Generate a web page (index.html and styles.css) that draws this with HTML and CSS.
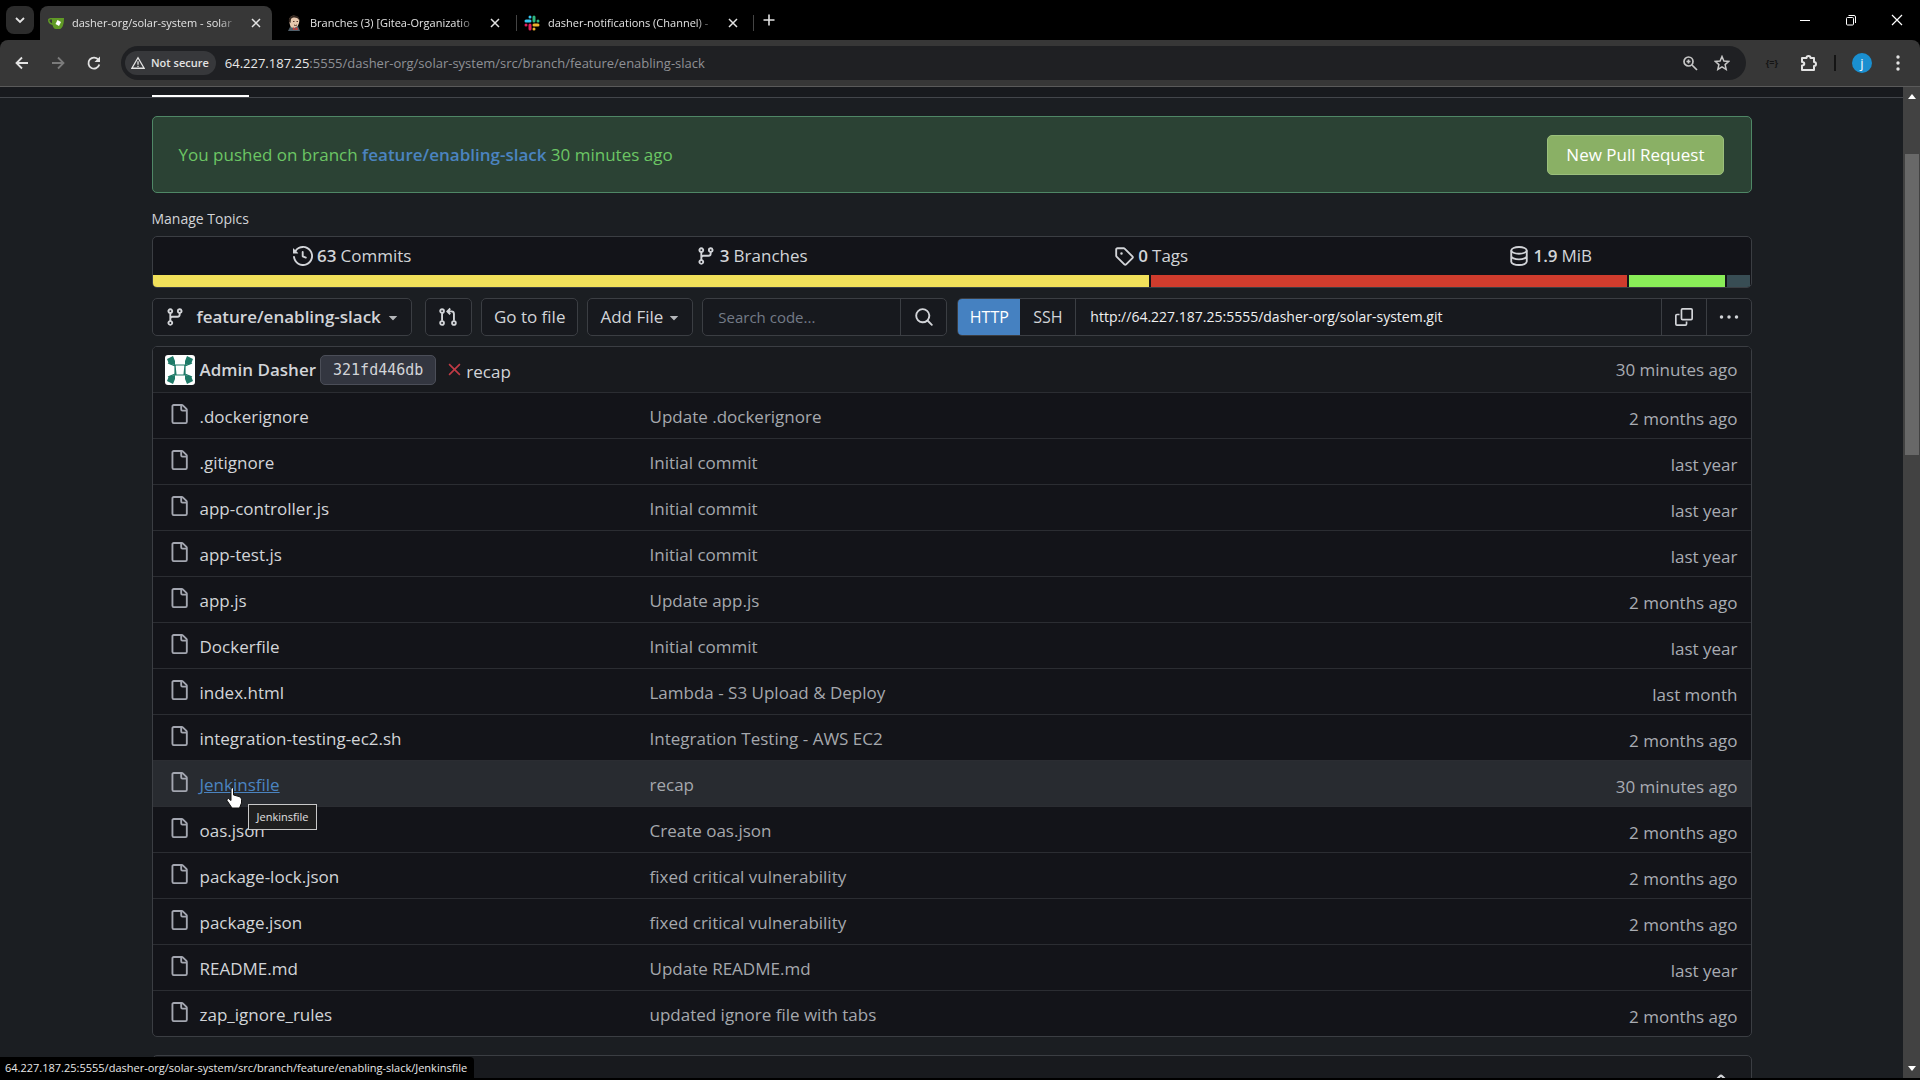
FILE: index.html
```
<!DOCTYPE html>
<html lang="en">
<head>
    <meta charset="UTF-8">
    <meta name="viewport" content="width=device-width, initial-scale=1.0">
    <title>dasher-org/solar-system - solar-system</title>
    <link rel="stylesheet" href="styles.css">
</head>
<body>
    <!-- Icons used more than once -->
    <svg class="sprite" aria-hidden="true">
        <symbol id="i-file" viewBox="0 0 16 16"><path d="M2 1.75C2 .784 2.784 0 3.75 0h6.586c.464 0 .909.184 1.237.513l2.914 2.914c.329.328.513.773.513 1.237v9.586A1.75 1.75 0 0 1 13.25 16h-9.5A1.75 1.75 0 0 1 2 14.25Zm1.75-.25a.25.25 0 0 0-.25.25v12.5c0 .138.112.25.25.25h9.5a.25.25 0 0 0 .25-.25V6h-2.75A1.75 1.75 0 0 1 9 4.25V1.5Zm6.75.062V4.25c0 .138.112.25.25.25h2.688l-.011-.013-2.914-2.914-.013-.011Z"/></symbol>
        <symbol id="i-branch" viewBox="0 0 16 16"><path d="M9.5 3.25a2.25 2.25 0 1 1 3 2.122V6A2.5 2.5 0 0 1 10 8.5H6a1 1 0 0 0-1 1v1.128a2.251 2.251 0 1 1-1.5 0V5.372a2.25 2.25 0 1 1 1.5 0v1.836A2.493 2.493 0 0 1 6 7h4a1 1 0 0 0 1-1v-.628A2.25 2.25 0 0 1 9.5 3.25Zm-6 0a.75.75 0 1 0 1.5 0 .75.75 0 0 0-1.5 0Zm8.25-.75a.75.75 0 1 0 0 1.5.75.75 0 0 0 0-1.5ZM4.25 12a.75.75 0 1 0 0 1.5.75.75 0 0 0 0-1.5Z"/></symbol>
        <symbol id="i-caret" viewBox="0 0 16 16"><path d="m4.427 7.427 3.396 3.396a.25.25 0 0 0 .354 0l3.396-3.396A.25.25 0 0 0 11.396 7H4.604a.25.25 0 0 0-.177.427Z"/></symbol>
        <symbol id="i-close" viewBox="0 0 10 10"><path d="M1 1l8 8M9 1l-8 8" fill="none" stroke="currentColor" stroke-width="1.5"/></symbol>
    </svg>

    <div class="tab-strip">
        <button class="tab-search" aria-label="Search tabs"><svg viewBox="0 0 10 10" width="10" height="10"><path d="M1 3l4 4 4-4" fill="none" stroke="currentColor" stroke-width="1.8"/></svg></button>
        <div class="tab active">
            <svg class="favicon" viewBox="0 0 16 16"><path d="M4 3h12c0 5-1 10-4 11H8C6 14 5 12 4.500 10 1.500 9.500 0 7.500 0 5c0-1.500 1.500-2 4-2zM1.500 5c0 1.500 1 3 2.500 3.300V4.500C2.500 4.300 1.500 4.300 1.500 5z" fill="#609926"/><path d="M9.500 5l3.500 2-2 4-3.500-2z" fill="#fff"/></svg>
            <span class="tab-title">dasher-org/solar-system - solar</span>
            <button class="tab-close" aria-label="Close tab"><svg class="x"><use href="#i-close"/></svg></button>
        </div>
        <div class="tab">
            <svg class="favicon" viewBox="0 0 16 16"><path d="M3 6c0-4 3-6 6-5 4 .5 5 4 4 7l-2 5H5L4 10z" fill="#e8c8ae"/><path d="M3 7c-1-4 2-7 6-6.500C12 1 14 3 13 5 11 2 7 2 5 4L4.500 8z" fill="#33261f"/><path d="M2 16l2-4 4 1 4-2 2 5z" fill="#52606b"/><path d="M7 12l2 2 2-2 1 3-3-.5L7 15z" fill="#d33833"/><path d="M7 6.500h1.500M10.500 6.500H12M8 10q1.500 1 3 0" stroke="#5d392c" fill="none"/></svg>
            <span class="tab-title">Branches (3) [Gitea-Organizatio</span>
            <button class="tab-close" aria-label="Close tab"><svg class="x"><use href="#i-close"/></svg></button>
        </div>
        <div class="tab divided">
            <svg class="favicon" viewBox="0 0 16 16" fill="none" stroke-width="3" stroke-linecap="round"><path d="M6 2v.1M2 6h4" stroke="#36c5f0"/><path d="M14 6v.1M10 2v4" stroke="#2eb67d"/><path d="M10 14v-.1M14 10h-4" stroke="#ecb22e"/><path d="M2 10v.1M6 14v-4" stroke="#e01e5a"/></svg>
            <span class="tab-title">dasher-notifications (Channel) -</span>
            <button class="tab-close" aria-label="Close tab"><svg class="x"><use href="#i-close"/></svg></button>
        </div>
        <button class="new-tab" aria-label="New tab"><svg viewBox="0 0 12 12" width="12" height="12"><path d="M6 0.500v11M0.500 6h11" stroke="currentColor" stroke-width="1.6"/></svg></button>
        <div class="window-buttons">
            <button aria-label="Minimize"><svg viewBox="0 0 12 12" width="12" height="12"><path d="M1 6.500h10" stroke="currentColor"/></svg></button>
            <button aria-label="Restore"><svg viewBox="0 0 12 12" width="12" height="12" fill="none" stroke="currentColor"><rect x="1.500" y="3.500" width="7" height="7.500" rx="1"/><path d="M3.500 1.500h5.500q1.500 0 1.500 1.500v6"/></svg></button>
            <button aria-label="Close"><svg viewBox="0 0 12 12" width="12" height="12"><path d="M1 1l10 10M11 1L1 11" stroke="currentColor" stroke-width="1.2"/></svg></button>
        </div>
    </div>

    <div class="browser-bar">
        <button class="nav-button" aria-label="Back"><svg viewBox="0 0 16 16" width="16" height="16"><path d="M14 8H3M8 2.500L2.500 8 8 13.500" fill="none" stroke="currentColor" stroke-width="1.8"/></svg></button>
        <button class="nav-button dim" aria-label="Forward"><svg viewBox="0 0 16 16" width="16" height="16"><path d="M2 8h11M8 2.500L13.500 8 8 13.500" fill="none" stroke="currentColor" stroke-width="1.8"/></svg></button>
        <button class="nav-button" aria-label="Reload"><svg viewBox="0 0 16 16" width="16" height="16"><path d="M13.300 9.500A5.500 5.500 0 1 1 12.500 5" fill="none" stroke="currentColor" stroke-width="1.8"/><path d="M14 1.500V7H8.500z" fill="currentColor"/></svg></button>
        <div class="omnibox">
            <button class="security"><svg viewBox="0 0 16 16" width="14" height="14"><path d="M8 2L15 14H1z" fill="none" stroke="currentColor" stroke-width="1.500"/><path d="M8 6v4M8 11v1.500" stroke="currentColor" stroke-width="1.500"/></svg>Not secure</button>
            <span class="address"><b>64.227.187.25</b>:5555/dasher-org/solar-system/src/branch/feature/enabling-slack</span>
            <button aria-label="Zoom"><svg viewBox="0 0 16 16" width="16" height="16" fill="none" stroke="currentColor" stroke-width="1.700"><circle cx="6.500" cy="6.500" r="4.500"/><path d="M10 10l5 5M4.500 6.500h4M6.500 4.500v4"/></svg></button>
            <button aria-label="Bookmark"><svg viewBox="0 0 16 16" width="16" height="16"><path d="M8 1.500l1.900 4.500 4.900.4-3.700 3.200 1.100 4.800L8 11.900l-4.200 2.500 1.100-4.800L1.200 6.400l4.900-.4z" fill="none" stroke="currentColor" stroke-width="1.500"/></svg></button>
        </div>
        <div class="browser-tools">
            <span class="extension">{=}</span>
            <button aria-label="Extensions"><svg viewBox="0 0 18 18" width="18" height="18"><path d="M2 4h4.500a2 2 0 0 1 4 0H14v4a2 2 0 0 1 0 4v4H2v-4.500c3 0 3-3.500 0-3.500z" fill="none" stroke="currentColor" stroke-width="2" stroke-linejoin="round"/></svg></button>
            <span class="tools-line"></span>
            <button class="account" aria-label="Account">j</button>
            <button aria-label="Menu"><svg viewBox="0 0 4 16" width="4" height="16" fill="currentColor"><circle cx="2" cy="2" r="1.700"/><circle cx="2" cy="8" r="1.700"/><circle cx="2" cy="14" r="1.700"/></svg></button>
        </div>
    </div>

    <div class="viewport">
        <main class="page">
            <div class="repo-tabs"><div class="container"><div class="repo-tab-line"></div></div></div>
            <div class="container">
                <div class="push-notice">
                    <span>You pushed on branch <a href="#">feature/enabling-slack</a> 30 minutes ago</span>
                    <button>New Pull Request</button>
                </div>

                <a class="manage-topics" href="#">Manage Topics</a>

                <div class="stats">
                    <div class="stats-row">
                        <a href="#"><svg class="icon" viewBox="0 0 16 16"><path d="m.427 1.927 1.215 1.215a8.002 8.002 0 1 1-1.600 5.685.75.75 0 1 1 1.493-.154 6.500 6.500 0 1 0 1.180-4.458l1.358 1.358A.25.25 0 0 1 3.896 6H.25A.25.25 0 0 1 0 5.750V2.104a.25.25 0 0 1 .427-.177ZM7.750 4a.75.75 0 0 1 .750.750v2.992l2.028.812a.75.75 0 0 1-.557 1.392l-2.500-1A.751.751 0 0 1 7 8.250v-3.500A.75.75 0 0 1 7.750 4Z"/></svg><b>63</b> Commits</a>
                        <a href="#"><svg class="icon"><use href="#i-branch"/></svg><b>3</b> Branches</a>
                        <a href="#"><svg class="icon" viewBox="0 0 16 16"><path d="M1 7.775V2.750C1 1.784 1.784 1 2.750 1h5.025c.464 0 .910.184 1.238.513l6.250 6.250a1.750 1.750 0 0 1 0 2.474l-5.026 5.026a1.750 1.750 0 0 1-2.474 0l-6.250-6.250A1.752 1.752 0 0 1 1 7.775Zm1.500 0c0 .066.026.130.073.177l6.250 6.250a.25.25 0 0 0 .354 0l5.025-5.025a.25.25 0 0 0 0-.354l-6.250-6.250a.25.25 0 0 0-.177-.073H2.750a.25.25 0 0 0-.250.250ZM6 5a1 1 0 1 1 0 2 1 1 0 0 1 0-2Z"/></svg><b>0</b> Tags</a>
                        <span><svg class="icon" viewBox="0 0 16 16" fill="none" stroke="currentColor" stroke-width="1.500"><ellipse cx="8" cy="3.500" rx="6.200" ry="2.700"/><path d="M1.800 3.500v9c0 1.500 2.800 2.700 6.200 2.700s6.200-1.200 6.200-2.700v-9M1.800 8c0 1.500 2.800 2.700 6.200 2.700s6.200-1.200 6.200-2.700"/></svg><b>1.9</b> MiB</span>
                    </div>
                    <div class="languages">
                        <div class="lang yellow" style="width: 62.6%"></div>
                        <div class="lang red" style="width: 29.9%"></div>
                        <div class="lang green" style="width: 6%"></div>
                        <div class="lang slate" style="width: 1.5%"></div>
                    </div>
                </div>

                <div class="repo-actions">
                    <button class="button branch-select"><svg class="icon"><use href="#i-branch"/></svg><b>feature/enabling-slack</b><svg class="caret"><use href="#i-caret"/></svg></button>
                    <button class="button compare" aria-label="Compare"><svg class="icon" viewBox="0 0 16 16" fill="none" stroke="currentColor" stroke-width="1.500"><circle cx="3.250" cy="3.250" r="1.500"/><circle cx="3.250" cy="12.750" r="1.500"/><circle cx="12.750" cy="12.750" r="1.500"/><path d="M3.250 5v6M12.750 11V5.500q0-2-2-2H8M9.800 1.200L7.500 3.500l2.300 2.300"/></svg></button>
                    <button class="button">Go to file</button>
                    <button class="button">Add File <svg class="caret"><use href="#i-caret"/></svg></button>
                    <form class="search">
                        <input type="text" placeholder="Search code..." aria-label="Search code">
                        <button type="button" aria-label="Search"><svg class="icon" viewBox="0 0 16 16"><path d="M10.680 11.740a6 6 0 0 1-7.922-8.982 6 6 0 0 1 8.982 7.922l3.040 3.040a.749.749 0 1 1-1.060 1.060ZM11.500 7a4.499 4.499 0 1 0-8.997 0A4.499 4.499 0 0 0 11.500 7Z"/></svg></button>
                    </form>
                    <div class="clone">
                        <button class="http">HTTP</button>
                        <button class="ssh">SSH</button>
                        <input type="text" value="http://64.227.187.25:5555/dasher-org/solar-system.git" aria-label="Clone address" readonly>
                        <button class="clone-tool" aria-label="Copy"><svg class="icon small" viewBox="0 0 16 16" fill="none" stroke="currentColor" stroke-width="1.500"><rect x="5.750" y=".750" width="9.500" height="9.500" rx="1"/><path d="M4 5.750H1.750q-1 0-1 1v7.500q0 1 1 1h7.500q1 0 1-1V12"/></svg></button>
                        <button class="clone-tool" aria-label="More"><svg class="icon" viewBox="0 0 16 16"><circle cx="2" cy="8" r="1.400"/><circle cx="8" cy="8" r="1.400"/><circle cx="14" cy="8" r="1.400"/></svg></button>
                    </div>
                </div>

                <table class="files">
                    <colgroup>
                        <col class="name-column">
                        <col>
                        <col class="age-column">
                    </colgroup>
                    <thead>
                        <tr>
                            <th colspan="2">
                                <div class="last-commit">
                                    <svg class="avatar" viewBox="0 0 30 30"><rect width="30" height="30" rx="3" fill="#fff"/><g fill="#1f7a68"><path d="M2 4l6-3 2 5v4l-6-1zM28 4l-6-3-2 5v4l6-1zM2 26l6 3 2-5v-4l-6 1zM28 26l-6 3-2-5v-4l6 1z"/></g><path d="M10 10h10l-1 10h-8zM3 8l7 3v8l-7 3M27 8l-7 3v8l7 3M10 10h10M10 20h10" fill="none" stroke="#1f7a68" stroke-width="1.200"/></svg>
                                    <a class="author" href="#">Admin Dasher</a>
                                    <a class="sha" href="#">321fd446db</a>
                                    <svg class="failed" viewBox="0 0 12 12"><path d="M1 1l10 10M11 1L1 11" stroke="currentColor" stroke-width="1.500"/></svg>
                                    <a class="summary" href="#">recap</a>
                                </div>
                            </th>
                            <th class="age">30 minutes ago</th>
                        </tr>
                    </thead>
                    <tbody>
                        <tr><td class="name"><svg class="icon"><use href="#i-file"/></svg><a href="#">.dockerignore</a></td><td class="message">Update .dockerignore</td><td class="age">2 months ago</td></tr>
                        <tr><td class="name"><svg class="icon"><use href="#i-file"/></svg><a href="#">.gitignore</a></td><td class="message">Initial commit</td><td class="age">last year</td></tr>
                        <tr><td class="name"><svg class="icon"><use href="#i-file"/></svg><a href="#">app-controller.js</a></td><td class="message">Initial commit</td><td class="age">last year</td></tr>
                        <tr><td class="name"><svg class="icon"><use href="#i-file"/></svg><a href="#">app-test.js</a></td><td class="message">Initial commit</td><td class="age">last year</td></tr>
                        <tr><td class="name"><svg class="icon"><use href="#i-file"/></svg><a href="#">app.js</a></td><td class="message">Update app.js</td><td class="age">2 months ago</td></tr>
                        <tr><td class="name"><svg class="icon"><use href="#i-file"/></svg><a href="#">Dockerfile</a></td><td class="message">Initial commit</td><td class="age">last year</td></tr>
                        <tr><td class="name"><svg class="icon"><use href="#i-file"/></svg><a href="#">index.html</a></td><td class="message">Lambda - S3 Upload &amp; Deploy</td><td class="age">last month</td></tr>
                        <tr><td class="name"><svg class="icon"><use href="#i-file"/></svg><a href="#">integration-testing-ec2.sh</a></td><td class="message">Integration Testing - AWS EC2</td><td class="age">2 months ago</td></tr>
                        <tr class="hovered"><td class="name"><svg class="icon"><use href="#i-file"/></svg><a href="#">Jenkinsfile</a>
                            <svg class="cursor" viewBox="0 0 16 22"><path d="M5 1.500q1.500-1.500 2.500 0V8l5.500 1.500q2.500.5 2.500 3V16l-2 5H6L1 13.500q-.5-2 1.500-2L5 13.500z" fill="#fff" stroke="#111"/></svg>
                            <span class="tooltip">Jenkinsfile</span>
                        </td><td class="message">recap</td><td class="age">30 minutes ago</td></tr>
                        <tr><td class="name"><svg class="icon"><use href="#i-file"/></svg><a href="#">oas.json</a></td><td class="message">Create oas.json</td><td class="age">2 months ago</td></tr>
                        <tr><td class="name"><svg class="icon"><use href="#i-file"/></svg><a href="#">package-lock.json</a></td><td class="message">fixed critical vulnerability</td><td class="age">2 months ago</td></tr>
                        <tr><td class="name"><svg class="icon"><use href="#i-file"/></svg><a href="#">package.json</a></td><td class="message">fixed critical vulnerability</td><td class="age">2 months ago</td></tr>
                        <tr><td class="name"><svg class="icon"><use href="#i-file"/></svg><a href="#">README.md</a></td><td class="message">Update README.md</td><td class="age">last year</td></tr>
                        <tr><td class="name"><svg class="icon"><use href="#i-file"/></svg><a href="#">zap_ignore_rules</a></td><td class="message">updated ignore file with tabs</td><td class="age">2 months ago</td></tr>
                    </tbody>
                </table>

                <div class="readme">
                    <svg viewBox="0 0 16 16" width="18" height="18"><path d="M3 6l4-4q1-1 2 0l4 4" fill="none" stroke="currentColor" stroke-width="2"/></svg>
                </div>
            </div>
        </main>

        <div class="scrollbar">
            <svg viewBox="0 0 8 5" width="8" height="5"><path d="M4 0l4 5H0z" fill="#fff"/></svg>
            <div class="scroll-track"><div class="scroll-thumb"></div></div>
            <svg viewBox="0 0 8 5" width="8" height="5"><path d="M4 5L0 0h8z" fill="#fff"/></svg>
        </div>

        <div class="status-bar">64.227.187.25:5555/dasher-org/solar-system/src/branch/feature/enabling-slack/Jenkinsfile</div>
    </div>
</body>
</html>
```
FILE: styles.css
```
* {
    box-sizing: border-box;
}

body {
    margin: 0;
    height: 100vh;
    display: flex;
    flex-direction: column;
    overflow: hidden;
    background-color: #000;
    color: #d2d4d8;
    font-family: "Open Sans", "Noto Sans", sans-serif;
    font-size: 17px;
    line-height: 24px;
}

a {
    color: inherit;
    text-decoration: none;
}

button, input {
    font: inherit;
    color: inherit;
    background: none;
    border: none;
    margin: 0;
    padding: 0;
}

button {
    display: flex;
    align-items: center;
    justify-content: center;
    white-space: nowrap;
}

b {
    font-weight: 600;
}

svg {
    flex: none;
}

.sprite {
    position: absolute;
    width: 0;
    height: 0;
}

.icon {
    width: 20px;
    height: 20px;
    fill: currentColor;
}

.icon[fill="none"] {
    fill: none;
}

.icon.small {
    width: 18px;
    height: 18px;
}

/* Browser tabs */
.tab-strip {
    display: flex;
    align-items: center;
    height: 40px;
    padding-left: 6px;
    color: #e3e3e3;
    font-size: 11px;
}

.tab-search {
    width: 28px;
    height: 28px;
    margin-right: 6px;
    border-radius: 8px;
    background-color: #2c2c2c;
}

.tab {
    display: flex;
    align-items: center;
    width: 238px;
    height: 34px;
    padding: 0 10px 0 8px;
    align-self: flex-end;
    border-radius: 8px 8px 0 0;
}

.tab.active {
    width: 232px;
    margin-right: 6px;
    padding-right: 5px;
    background-color: #373737;
}

.tab.divided {
    border-radius: 0;
    background: linear-gradient(#444, #444) left center / 1px 16px no-repeat,
        linear-gradient(#444, #444) right center / 1px 16px no-repeat;
}

.favicon {
    width: 16px;
    height: 16px;
    margin-right: 8px;
}

.tab-title {
    flex: 1;
    min-width: 0;
    overflow: hidden;
    white-space: nowrap;
    mask-image: linear-gradient(to right, #000 88%, transparent);
}

.tab-close {
    width: 22px;
    height: 22px;
    margin-left: 6px;
}

.x {
    width: 10px;
    height: 10px;
}

.new-tab {
    width: 30px;
    height: 28px;
}

.window-buttons {
    display: flex;
    margin-left: auto;
}

.window-buttons button {
    width: 46px;
    height: 40px;
    color: #fff;
}

/* Address bar */
.browser-bar {
    display: flex;
    align-items: center;
    height: 47px;
    padding: 0 8px 0 4px;
    background-color: #373737;
    border-bottom: 1px solid #5a5a5a;
    border-radius: 8px 8px 0 0;
    color: #e3e3e3;
}

.nav-button {
    width: 36px;
    height: 34px;
}

.nav-button.dim {
    color: #7b7b7b;
}

.omnibox {
    flex: 1;
    display: flex;
    align-items: center;
    gap: 16px;
    height: 34px;
    margin-left: 9px;
    padding: 0 16px 0 4px;
    border-radius: 17px;
    background-color: #1f2023;
    color: #c7c7c7;
}

.security {
    gap: 6px;
    height: 24px;
    padding: 0 7px 0 6px;
    border-radius: 12px;
    background-color: #37383b;
    color: #e3e3e3;
    font-size: 11px;
    font-weight: 600;
}

.address {
    flex: 1;
    margin-left: -7px;
    color: #8f9196;
    font-size: 13px;
}

.address b {
    color: #e8e8e8;
    font-weight: 400;
}

.browser-tools {
    display: flex;
    align-items: center;
    gap: 16px;
    padding: 0 12px 0 20px;
}

.extension {
    margin-right: 6px;
    color: #141414;
    font-size: 9px;
    font-weight: 700;
}

.tools-line {
    width: 2px;
    height: 16px;
    background-color: #141414;
}

.account {
    width: 20px;
    height: 20px;
    margin-right: 8px;
    border-radius: 50%;
    background-color: #1a8fd0;
    color: #fff;
    font-size: 13px;
}

/* Page */
.viewport {
    position: relative;
    flex: 1;
    display: flex;
    min-height: 0;
    margin-bottom: 2px;
}

.page {
    flex: 1;
    overflow: hidden;
    background-color: #1b1e22;
}

.container {
    max-width: 1600px;
    margin: 0 auto;
}

.repo-tabs {
    height: 11px;
    padding-top: 8px;
    border-bottom: 1px solid #43464b;
    background-color: #181a1e;
}

.repo-tab-line {
    width: 97px;
    height: 2px;
    background-color: #fff;
}

.push-notice {
    display: flex;
    align-items: center;
    justify-content: space-between;
    height: 77px;
    margin-top: 18px;
    padding: 0 27px 0 26px;
    border: 1px solid #4f8766;
    border-radius: 5px;
    background-color: #2b4234;
    color: #6cc664;
}

.push-notice a {
    color: #4b84c0;
    font-weight: 600;
}

.push-notice button {
    height: 40px;
    padding: 0 18px;
    border: 1px solid #9bbf7c;
    border-radius: 5px;
    background-color: #8ab065;
    color: #fff;
}

.manage-topics {
    display: block;
    margin: 14px 0 5px;
    font-size: 14px;
}

.stats {
    overflow: hidden;
    border: 1px solid #3b3e43;
    border-radius: 5px;
    background-color: #131419;
}

.stats-row {
    display: grid;
    grid-template-columns: repeat(4, 1fr);
    height: 38px;
}

.stats-row > * {
    display: flex;
    align-items: center;
    justify-content: center;
    gap: 4px;
}

.languages {
    display: flex;
    gap: 2px;
    height: 12px;
}

.lang.yellow {
    background-color: #f1e05a;
}

.lang.red {
    background-color: #d03c2d;
}

.lang.green {
    background-color: #89ed58;
}

.lang.slate {
    background-color: #384d54;
}

/* Branch, search and clone controls */
.repo-actions {
    display: flex;
    gap: 9px;
    height: 38px;
    margin: 10px 0;
}

.button {
    gap: 5px;
    padding: 0 12px;
    border: 1px solid #3b3e43;
    border-radius: 5px;
    background-color: #17191e;
}

.branch-select {
    gap: 6px;
    margin-right: 4px;
}

.branch-select .icon {
    margin-right: 6px;
}

.compare {
    width: 47px;
    padding: 0;
}

.caret {
    width: 18px;
    height: 18px;
    margin: 0 -3px;
    fill: #b4b6ba;
}

.search, .clone {
    display: flex;
    overflow: hidden;
    border: 1px solid #3b3e43;
    border-radius: 5px;
    background-color: #17191e;
}

.search {
    width: 245px;
    margin-right: 1px;
}

.search input {
    flex: 1;
    min-width: 0;
    padding: 0 15px;
    font-size: 15px;
}

.search input::placeholder {
    color: #747b87;
}

.search button {
    width: 46px;
    border-left: 1px solid #3b3e43;
}

.clone {
    flex: 1;
}

.clone .http {
    width: 62px;
    background-color: #4581c1;
    color: #fff;
    font-size: 16px;
}

.clone .ssh {
    width: 56px;
    border-right: 1px solid #3b3e43;
    font-size: 16px;
}

.clone input {
    flex: 1;
    min-width: 0;
    padding: 0 14px;
    color: #f0f0f0;
    font-size: 14px;
}

.clone-tool {
    width: 45px;
    border-left: 1px solid #3b3e43;
}

/* File list */
.files {
    width: 100%;
    overflow: hidden;
    border: 1px solid #3b3e43;
    border-radius: 5px;
    border-spacing: 0;
    table-layout: fixed;
    background-color: #131419;
}

.name-column {
    width: 497px;
}

.age-column {
    width: 220px;
}

.files th {
    height: 45px;
    padding: 0;
    background-color: #181a1e;
    font-weight: 400;
    text-align: left;
}

.files td {
    height: 46px;
    padding: 2px 0 0;
    border-top: 1px solid #2b2d32;
}

.last-commit {
    display: flex;
    align-items: center;
    padding-left: 12px;
}

.avatar {
    width: 30px;
    height: 30px;
    margin-right: 5px;
}

.author {
    font-weight: 600;
}

.sha {
    margin: 0 12px 0 4px;
    padding: 2px 12px;
    border: 1px solid #4b4e58;
    border-radius: 5px;
    background-color: #333640;
    font-family: "DejaVu Sans Mono", monospace;
    font-size: 15px;
}

.failed {
    width: 13px;
    height: 13px;
    margin-right: 5px;
    color: #c03a45;
}

.summary {
    padding-top: 4px;
}

.name {
    position: relative;
}

.name .icon {
    margin: 0 11px 0 16px;
    vertical-align: -1px;
    color: #a3a6b0;
}

.message {
    color: #a5a8ad;
}

.files .age {
    padding-right: 13px;
    color: #a9acb3;
    text-align: right;
}

.files td.age {
    padding-top: 6px;
}

.hovered td {
    background-color: #282b30;
}

.hovered a {
    color: #4b84c0;
    text-decoration: underline;
}

.cursor {
    position: absolute;
    top: 26px;
    left: 73px;
    z-index: 2;
    width: 16px;
    height: 22px;
}

.tooltip {
    position: absolute;
    top: 43px;
    left: 95px;
    z-index: 1;
    padding: 3px 8px;
    border: 1px solid #c8c8c8;
    background-color: #1f1f1f;
    color: #e0e0e0;
    font-size: 11px;
    line-height: 18px;
}

.readme {
    display: flex;
    justify-content: flex-end;
    height: 80px;
    margin-top: 18px;
    padding: 18px 21px;
    border: 1px solid #3b3e43;
    border-radius: 5px;
    background-color: #181a1e;
}

.scrollbar {
    display: flex;
    flex-direction: column;
    align-items: center;
    width: 17px;
    padding: 7px 0;
    background-color: #424242;
}

.scroll-track {
    flex: 1;
    width: 14px;
    padding-top: 55px;
}

.scroll-thumb {
    height: 33%;
    background-color: #686868;
}

.status-bar {
    position: absolute;
    bottom: 0;
    left: 0;
    padding: 0 7px 0 5px;
    border-top-right-radius: 4px;
    background-color: #000;
    color: #e8e8e8;
    font-size: 11px;
    line-height: 21px;
}
```
